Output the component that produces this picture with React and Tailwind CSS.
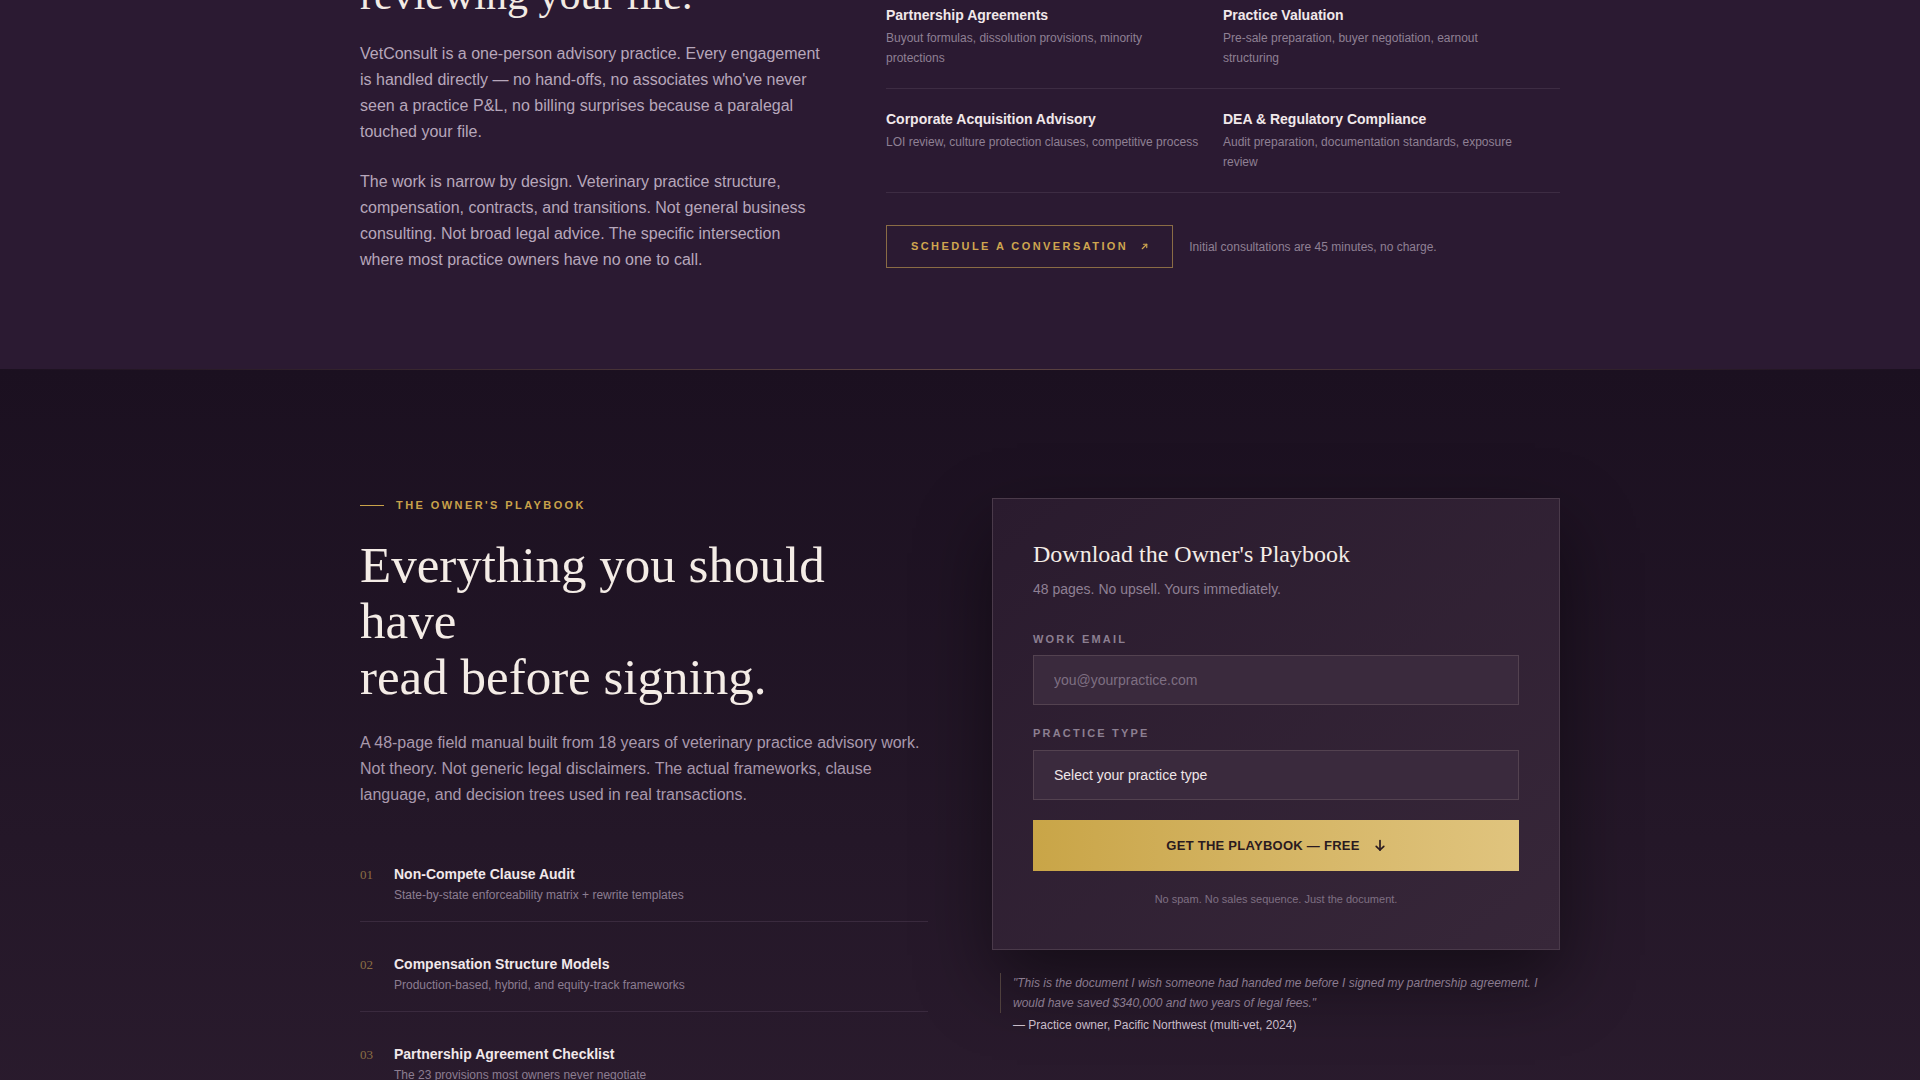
import React from "react";

const sans = { fontFamily: '"Liberation Sans", Arial, sans-serif' };

const services = [
  ["Partnership Agreements", "Buyout formulas, dissolution provisions, minority protections"],
  ["Practice Valuation", "Pre-sale preparation, buyer negotiation, earnout structuring"],
  ["Corporate Acquisition Advisory", "LOI review, culture protection clauses, competitive process"],
  ["DEA & Regulatory Compliance", "Audit preparation, documentation standards, exposure review"],
];

const items = [
  ["01", "Non-Compete Clause Audit", "State-by-state enforceability matrix + rewrite templates"],
  ["02", "Compensation Structure Models", "Production-based, hybrid, and equity-track frameworks"],
  ["03", "Partnership Agreement Checklist", "The 23 provisions most owners never negotiate"],
  ["04", "Exit & Succession Timeline", "A five-year runway for selling on your own terms"],
];

function ArrowUpRightSmall() {
  return (
    <svg width="9" height="9" viewBox="0 0 10 10" fill="none" stroke="currentColor" strokeWidth="1.3" strokeLinecap="round" strokeLinejoin="round">
      <path d="M2.5 7.5 L7.5 2.5" />
      <path d="M3.8 2.5 H7.5 V6.2" />
    </svg>
  );
}

function ArrowDownSmall() {
  return (
    <svg width="12" height="13" viewBox="0 0 12 13" fill="none" stroke="currentColor" strokeWidth="1.7" strokeLinecap="round" strokeLinejoin="round">
      <path d="M6 1.5 V11" />
      <path d="M2.2 7.3 L6 11 L9.8 7.3" />
    </svg>
  );
}

export default function App() {
  return (
    <div className="min-h-screen bg-[#1c1020] overflow-hidden" style={sans}>
      {/* Top section */}
      <section className="bg-[#2b1a32]">
        <div className="mx-auto w-[1200px] grid grid-cols-[466px_674px] gap-x-[60px] items-start pb-[96px]">
          <div>
            <h2
              className="-mt-[77px] text-[42px] leading-[48px] text-[#f3ebe4] font-normal"
              style={{ fontFamily: '"Liberation Serif", "Times New Roman", serif' }}
            >
              Nobody else is
              <br />
              reviewing your file.
            </h2>
            <p className="mt-[22px] text-[16px] leading-[26px] text-[#b7a7bb]">
              VetConsult is a one-person advisory practice. Every engagement is handled directly — no hand-offs, no
              associates who've never seen a practice P&amp;L, no billing surprises because a paralegal touched your file.
            </p>
            <p className="mt-6 text-[16px] leading-[26px] text-[#b7a7bb]">
              The work is narrow by design. Veterinary practice structure, compensation, contracts, and transitions. Not
              general business consulting. Not broad legal advice. The specific intersection where most practice owners
              have no one to call.
            </p>
          </div>
          <div>
            <div className="-mt-[15px] grid grid-cols-2">
              {services.map(([t, d]) => (
                <div key={t} className="py-5 pr-6 border-b border-[#3d2c43]">
                  <div className="text-[14px] leading-[20px] font-bold text-[#f1e8ea]">{t}</div>
                  <div className="mt-1 text-[12px] leading-[19.5px] text-[#8f8094]">{d}</div>
                </div>
              ))}
            </div>
            <div className="mt-8 flex items-center gap-4">
              <button className="h-[43px] pl-[24px] pr-[23px] border border-[#8a6c45] flex items-center gap-[12px] text-[#cfa64f] text-[11px] font-bold tracking-[0.22em]">
                <span>SCHEDULE A CONVERSATION</span>
                <ArrowUpRightSmall />
              </button>
              <span className="text-[12px] text-[#8f8094]">Initial consultations are 45 minutes, no charge.</span>
            </div>
          </div>
        </div>
      </section>

      {/* Bottom section */}
      <section className="relative bg-gradient-to-b from-[#1b1020] via-[#241728] to-[#2e1e31]">
        <div className="h-px w-full bg-gradient-to-r from-transparent via-[#5e4543] to-transparent" />
        <div className="mx-auto w-[1200px] grid grid-cols-2 gap-x-16 items-start pt-[127px] pb-[120px]">
          <div>
            <div className="flex items-center gap-3 h-4">
              <span className="block w-6 h-px bg-[#c9a24a]" />
              <span className="text-[11px] leading-4 font-bold tracking-[0.22em] text-[#c9a24a]">THE OWNER'S PLAYBOOK</span>
            </div>
            <h2
              className="mt-[24px] text-[51px] leading-[56px] text-[#f4ece6] font-normal"
              style={{ fontFamily: '"Liberation Serif", "Times New Roman", serif' }}
            >
              Everything you should have
              <br />
              read before signing.
            </h2>
            <p className="mt-[25px] text-[16px] leading-[26px] text-[#a999ad]">
              A 48-page field manual built from 18 years of veterinary practice advisory work. Not theory. Not generic
              legal disclaimers. The actual frameworks, clause language, and decision trees used in real transactions.
            </p>
            <div className="mt-10 flex flex-col gap-4">
              {items.map(([n, t, d]) => (
                <div key={n} className="flex items-baseline pt-4 pb-[17px] border-b border-[#3a2a3e]">
                  <span
                    className="w-[34px] shrink-0 text-[13px] text-[#8c6f44]"
                    style={{ fontFamily: '"Liberation Serif", "Times New Roman", serif' }}
                  >
                    {n}
                  </span>
                  <div>
                    <div className="text-[14px] leading-[20px] font-bold text-[#f1e8ea]">{t}</div>
                    <div className="mt-0.5 text-[12px] leading-[18px] text-[#8c7d91]">{d}</div>
                  </div>
                </div>
              ))}
            </div>
          </div>

          <div className="mt-px">
            <div className="border border-[#4a3a4a] bg-gradient-to-br from-[#2a1b2e] to-[#372739] px-10 pt-10 pb-[42px] shadow-[0_30px_70px_rgba(0,0,0,0.45)]">
              <h3
                className="text-[24px] leading-[30px] text-[#f4ece6] font-normal"
                style={{ fontFamily: '"Liberation Serif", "Times New Roman", serif' }}
              >
                Download the Owner's Playbook
              </h3>
              <p className="mt-2.5 text-[14px] leading-[20px] text-[#8f8094]">48 pages. No upsell. Yours immediately.</p>
              <label className="block mt-8 text-[11px] leading-4 font-bold tracking-[0.2em] text-[#8c7f91]">WORK EMAIL</label>
              <input
                type="email"
                placeholder="you@yourpractice.com"
                className="mt-[8px] block w-full h-[50px] px-5 bg-[#3a2a3d] border border-[#534250] text-[14px] text-[#efe6e8] placeholder:text-[#7e6f82] outline-none"
                style={sans}
              />
              <label className="block mt-5 text-[11px] leading-4 font-bold tracking-[0.2em] text-[#8c7f91]">PRACTICE TYPE</label>
              <select
                className="mt-[9px] block w-full h-[50px] px-5 bg-[#3a2a3d] border border-[#534250] text-[14px] text-[#efe6e8] appearance-none outline-none"
                style={sans}
                defaultValue=""
              >
                <option value="">Select your practice type</option>
                <option>Single-doctor practice</option>
                <option>Multi-vet practice</option>
                <option>Specialty / emergency</option>
              </select>
              <button className="mt-[20px] w-full h-[51px] flex items-center justify-center gap-[14px] bg-gradient-to-r from-[#c9a547] to-[#e0c47e] text-[#2a1a20] text-[13px] font-bold tracking-[0.02em]">
                <span>GET THE PLAYBOOK — FREE</span>
                <ArrowDownSmall />
              </button>
              <p className="mt-[20px] text-center text-[11px] leading-4 text-[#7f7083]">No spam. No sales sequence. Just the document.</p>
            </div>
            <figure className="mt-[23px] ml-2">
              <blockquote className="border-l border-[#4e3f3c] pl-3 text-[12px] leading-[20px] italic text-[#8a7b8f]">
                "This is the document I wish someone had handed me before I signed my partnership agreement. I would have
                saved $340,000 and two years of legal fees."
              </blockquote>
              <figcaption className="pl-[13px] mt-[4px] text-[12px] leading-4 text-[#c9bdc9]">
                — Practice owner, Pacific Northwest (multi-vet, 2024)
              </figcaption>
            </figure>
          </div>
        </div>
      </section>
    </div>
  );
}
